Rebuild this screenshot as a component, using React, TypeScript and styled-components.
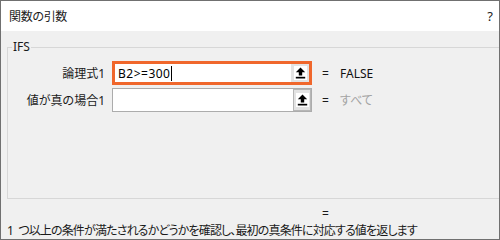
import styled, { createGlobalStyle } from "styled-components";

const GlobalStyle = createGlobalStyle`
  body {
    margin: 0;
    background: #ffffff;
  }
`;

interface ArgRow {
  label: string;
  text: string;
  focused: boolean;
  value: string;
  muted: boolean;
}

const rows: ArgRow[] = [
  { label: "論理式1", text: "B2>=300", focused: true, value: "FALSE", muted: false },
  { label: "値が真の場合1", text: "", focused: false, value: "すべて", muted: true },
];

const RefIcon = () => (
  <svg width="11" height="12" viewBox="0 0 11 12">
    <path d="M5.5 0.5 L0.8 5.2 H3.8 V8.6 H7.2 V5.2 H10.2 Z" fill="#000" />
    <rect x="0.8" y="9.8" width="9.4" height="1.7" fill="#000" />
  </svg>
);

export default function App() {
  return (
    <>
      <GlobalStyle />
      <Window>
        <TitleBar>
          <Title>関数の引数</Title>
          <Help>?</Help>
        </TitleBar>
        <Body>
          <GroupBox>
            <Legend>IFS</Legend>
            <Rows>
              {rows.map((row) => (
                <Row key={row.label}>
                  <Label>{row.label}</Label>
                  <Field $focused={row.focused}>
                    <FieldText $focused={row.focused}>
                      {row.text}
                      {row.focused && <Caret />}
                    </FieldText>
                    <RefButton $focused={row.focused}>
                      <RefFace>
                        <RefIcon />
                      </RefFace>
                    </RefButton>
                  </Field>
                  <Equals>=</Equals>
                  <Value $muted={row.muted}>{row.value}</Value>
                </Row>
              ))}
            </Rows>
          </GroupBox>
          <Result>=</Result>
          <Description>
            1 つ以上の条件が満たされるかどうかを確認し、最初の真条件に対応する値を返します
          </Description>
        </Body>
      </Window>
    </>
  );
}

// Styles
const Window = styled.div`
  width: 500px;
  height: 240px;
  box-sizing: border-box;
  border: 1px solid #707070;
  background: #f0f0f0;
  display: flex;
  flex-direction: column;
  overflow: hidden;
  font-family: "Noto Sans", "Noto Sans CJK JP", sans-serif;
  font-size: 12px;
  font-feature-settings: "palt";
  color: #1a1a1a;
`;

const TitleBar = styled.div`
  height: 30px;
  flex-shrink: 0;
  background: #ffffff;
  display: flex;
  align-items: center;
  justify-content: space-between;
  padding: 0 6px 0 8px;
`;

const Title = styled.span`
  font-size: 12px;
  letter-spacing: -0.3px;
  color: #1a1a1a;
`;

const Help = styled.span`
  font-size: 13px;
  color: #222;
`;

const Body = styled.div`
  flex: 1;
  display: flex;
  flex-direction: column;
  padding: 8px 0 0 6px;
  min-height: 0;
`;

const GroupBox = styled.fieldset`
  flex: 1;
  margin: 0;
  min-width: 0;
  padding: 6px 0 0 0;
  border: 1px solid #d7d7d7;
  border-right: none;
`;

const Legend = styled.legend`
  margin-left: 4px;
  padding: 0 1px;
  line-height: 16px;
  font-size: 12px;
  color: #1a1a1a;
`;

const Rows = styled.div`
  display: flex;
  flex-direction: column;
  gap: 3px;
`;

const Row = styled.div`
  display: grid;
  grid-template-columns: 104px 210px 18px 1fr;
  align-items: center;
  height: 24px;
`;

const Label = styled.span`
  text-align: right;
  padding-right: 7px;
  white-space: nowrap;
`;

const Field = styled.div<{ $focused: boolean }>`
  width: 200px;
  height: 24px;
  box-sizing: border-box;
  display: flex;
  background: #ffffff;
  border: ${(p) => (p.$focused ? "3px solid #f0672c" : "1px solid #acacac")};
`;

const FieldText = styled.div<{ $focused: boolean }>`
  flex: 1;
  display: flex;
  align-items: center;
  padding-left: ${(p) => (p.$focused ? "3px" : "5px")};
  font-size: 12px;
  letter-spacing: 0.5px;
  color: #000;
`;

const Caret = styled.span`
  display: inline-block;
  width: 1px;
  height: 15px;
  margin-left: 1px;
  background: #000;
`;

const RefButton = styled.div<{ $focused: boolean }>`
  width: 18px;
  display: flex;
  align-items: center;
  justify-content: center;
  background: #e3e3e3;
  box-shadow: ${(p) => (p.$focused ? "none" : "inset 0 0 0 1px #b6b6b6")};
`;

const RefFace = styled.div`
  width: 13px;
  height: 14px;
  background: #ffffff;
  display: flex;
  align-items: center;
  justify-content: center;
`;

const Equals = styled.span`
  color: #1a1a1a;
`;

const Value = styled.span<{ $muted: boolean }>`
  color: ${(p) => (p.$muted ? "#a3a3a3" : "#111")};
`;

const Result = styled.div`
  height: 16px;
  line-height: 16px;
  margin-top: 7px;
  padding-left: 315px;
`;

const Description = styled.div`
  height: 16px;
  line-height: 16px;
  margin-top: 1px;
  letter-spacing: -0.85px;
  word-spacing: 3px;
  white-space: nowrap;
`;
